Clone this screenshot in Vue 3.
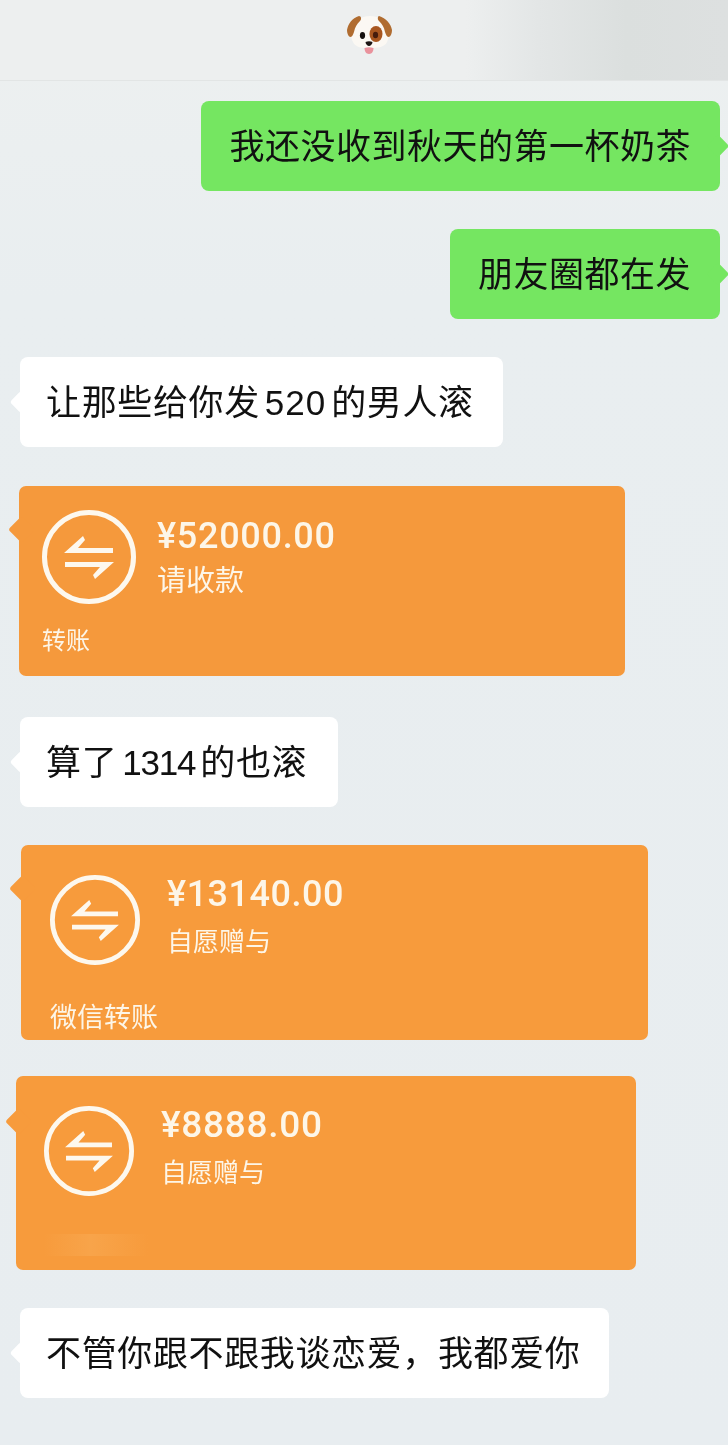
<template>
  <div class="chat">
    <header class="top">
      <svg class="dog" width="60" height="50" viewBox="0 0 60 50">
        <path d="M29 38c-8 0-14-1-16-6-2-4-3-9-1-14 3-8 10-12 18-12s15 4 18 12c2 5 1 10-1 14-2 5-9 6-18 6z" fill="#fbf8f3" />
        <path d="M19 6C12 8 8 14 7 20c0 3 1 6 3 7 2 0 3-2 4-5 1-5 3-8 6-11 2-2 1-5-1-5z" fill="#b06c30" />
        <path d="M39 6c7 2 12 8 13 14 0 3-1 6-3 7-2 0-3-2-4-5-1-5-3-8-6-11-2-2-1-5 0-5z" fill="#b06c30" />
        <ellipse cx="36" cy="24" rx="6.5" ry="8" fill="#a8561f" />
        <ellipse cx="35.500" cy="25" rx="2.600" ry="3.200" fill="#461c0c" />
        <ellipse cx="22.500" cy="25.500" rx="2.600" ry="3.400" fill="#14100f" />
        <path d="M25.500 32c2-1 5-1 7 0 0 2-2 4-3.500 4s-3.500-2-3.500-4z" fill="#1b1413" />
        <path d="M24.500 38c3-1 6-1 9 0 0 3-1.500 6-4.500 6s-4.500-3-4.500-6z" fill="#e9929c" />
      </svg>
    </header>

    <div class="list">
      <template v-for="(m, i) in messages" :key="i">
        <div v-if="m.type === 'text'" class="bubble" :class="[m.from, m.cls]">
          {{ m.text }}<span v-if="m.num" class="num">{{ m.num }}</span>{{ m.after }}
        </div>
        <div v-else class="pay" :class="m.cls">
          <div class="pay-main">
            <svg class="pay-icon" viewBox="0 0 94 94">
              <circle cx="47" cy="47" r="44.500" fill="none" stroke="#fdf8ee" stroke-width="5" />
              <path d="M22 43 41 26 43 30 36 38H71V43Z" fill="#fdf8ee" />
              <path d="M72 52 53 69 51 65 58 57H23V52Z" fill="#fdf8ee" />
            </svg>
            <div class="pay-info">
              <div class="amount">{{ m.amount }}</div>
              <div class="note">{{ m.note }}</div>
            </div>
          </div>
          <div v-if="m.label" class="label">{{ m.label }}</div>
          <div v-else class="label smudge"></div>
        </div>
      </template>
    </div>
  </div>
</template>

<script setup>
const messages = [
  { type: 'text', from: 'me', cls: 'm1', text: '我还没收到秋天的第一杯奶茶' },
  { type: 'text', from: 'me', cls: 'm2', text: '朋友圈都在发' },
  { type: 'text', from: 'other', cls: 'm3', text: '让那些给你发', num: '520', after: '的男人滚' },
  { type: 'pay', cls: 'p1', amount: '¥52000.00', note: '请收款', label: '转账' },
  { type: 'text', from: 'other', cls: 'm4', text: '算了', num: '1314', after: '的也滚' },
  { type: 'pay', cls: 'p2', amount: '¥13140.00', note: '自愿赠与', label: '微信转账' },
  { type: 'pay', cls: 'p3', amount: '¥8888.00', note: '自愿赠与', label: '' },
  { type: 'text', from: 'other', cls: 'm5', text: '不管你跟不跟我谈恋爱，我都爱你' },
]
</script>

<style>
html, body {
  margin: 0;
  background: #e9eef0;
}
</style>

<style scoped>
.chat {
  width: 728px;
  height: 1445px;
  overflow: hidden;
  background: linear-gradient(180deg, #edf0f0 0, #e9eef0 300px, #e8edf0 100%);
  font-family: "Noto Sans CJK SC", "Liberation Sans", sans-serif;
}
.top {
  height: 81px;
  display: flex;
  justify-content: center;
  align-items: center;
  box-sizing: border-box;
  border-bottom: 1px solid #e2e5e5;
  background: linear-gradient(90deg, #edefef 0, #edefef 64%, #e3e6e6 74%, #dbdfde 86%, #dde0e0 100%);
}
.dog {
  margin-bottom: 10px;
  margin-left: 12px;
}
.list {
  display: flex;
  flex-direction: column;
  align-items: flex-start;
}
.bubble {
  position: relative;
  height: 90px;
  line-height: 85px;
  box-sizing: border-box;
  border-radius: 8px;
  font-size: 35px;
  letter-spacing: 0.630px;
  color: #111;
  white-space: nowrap;
}
.num {
  display: inline-block;
  margin: 0 5px;
  font-family: "Liberation Sans", sans-serif;
  letter-spacing: 1px;
}
.bubble::after,
.pay::after {
  content: "";
  position: absolute;
  width: 16px;
  height: 16px;
  transform: rotate(45deg);
  border-radius: 3px;
}
.me {
  align-self: flex-end;
  margin-right: 8px;
  padding: 0 29px 0 28px;
  background: #75e661;
}
.me::after {
  right: -6px;
  top: 37px;
  background: #75e661;
}
.other {
  margin-left: 20px;
  padding: 0 29px 0 26px;
  background: #fff;
}
.other::after {
  left: -7px;
  top: 37px;
  background: #fff;
}
.m1 { margin-top: 20px; letter-spacing: 0.5px; }
.m2 { margin-top: 38px; letter-spacing: 0.5px; }
.m3 { margin-top: 38px; }
.m4 { margin-top: 41px; padding-right: 31px; }
.m4 .num { letter-spacing: -1.200px; }
.m5 { margin-top: 38px; }

.pay {
  position: relative;
  box-sizing: border-box;
  display: flex;
  flex-direction: column;
  justify-content: space-between;
  border-radius: 7px;
  background: #f79b3c;
  color: #fdf6e8;
}
.pay::after {
  width: 19px;
  height: 19px;
  left: -7px;
  background: #f79b3c;
}
.pay-main {
  display: flex;
  align-items: flex-start;
}
.pay-icon {
  flex: none;
}
.amount {
  font-family: Roboto, "Liberation Sans", sans-serif;
  font-size: 36px;
  line-height: 42px;
  letter-spacing: 0.700px;
  font-weight: 500;
}
.note {
  font-size: 29px;
  line-height: 40px;
}
.label {
  font-size: 24px;
  line-height: 30px;
}
.p1 {
  margin-top: 39px;
  margin-left: 19px;
  width: 606px;
  height: 190px;
  padding: 24px 0 22px 23px;
  background: #f5993c;
}
.p1::after { top: 34px; background: #f5993c; }
.p1 .pay-icon { width: 94px; height: 94px; }
.p1 .pay-info { margin-left: 21px; margin-top: 5px; }
.p1 .note { margin-top: 1px; }
.p2 {
  margin-top: 38px;
  margin-left: 21px;
  width: 627px;
  height: 195px;
  padding: 30px 0 9px 29px;
}
.p2::after { top: 34px; left: -8px; }
.p2 .pay-icon { width: 90px; height: 90px; }
.p2 .pay-info { margin-left: 27px; margin-top: -2px; }
.p2 .amount { letter-spacing: 0.500px; }
.p2 .note { margin-top: 5px; font-size: 26px; }
.p2 .label { font-size: 27px; }
.p3 {
  margin-top: 36px;
  margin-left: 16px;
  width: 620px;
  height: 194px;
  padding: 30px 0 14px 28px;
}
.p3::after { top: 36px; }
.p3 .pay-icon { width: 90px; height: 90px; }
.p3 .pay-info { margin-left: 27px; margin-top: -2px; }
.p3 .amount { font-size: 37px; }
.p3 .note { margin-top: 5px; font-size: 26px; }
.smudge {
  width: 104px;
  height: 22px;
  background: linear-gradient(90deg, #f79b3c, #f9ad58 45%, #f79b3c);
  opacity: 0.5;
}
.bubble,
.pay,
.dog {
  filter: blur(0.500px);
}
</style>
